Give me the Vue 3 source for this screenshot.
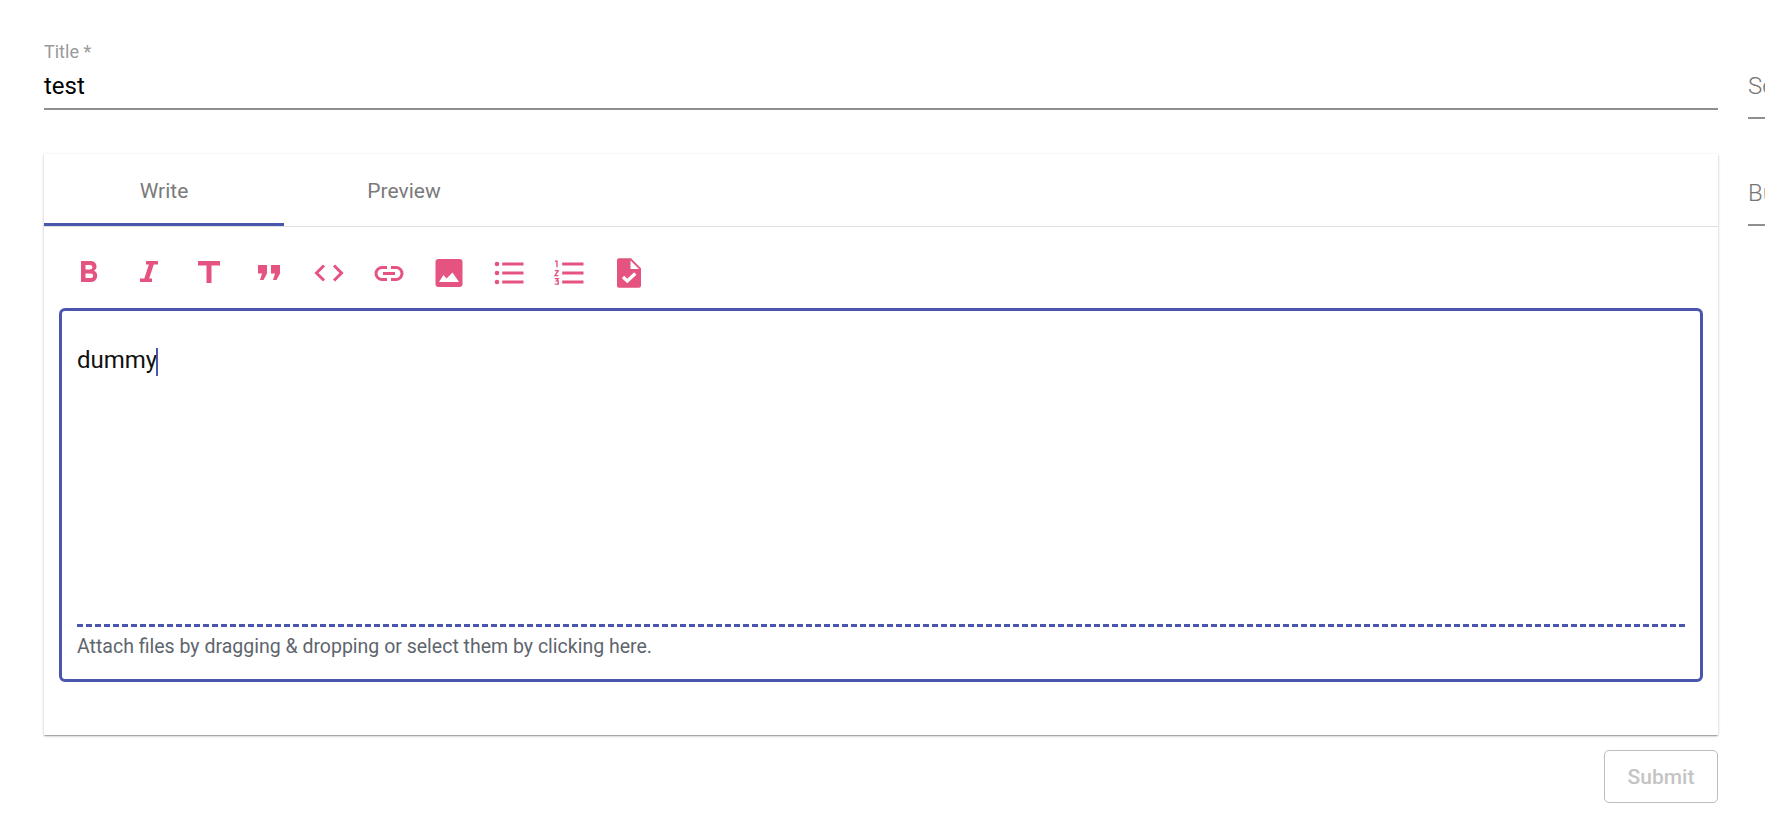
<script setup>
const tabs = ['Write', 'Preview']
</script>

<template>
  <div class="page">
    <main class="main">
      <div class="field">
        <label class="field-label">Title *</label>
        <div class="field-value">test</div>
      </div>

      <section class="card">
        <div class="tabs">
          <div v-for="(t, i) in tabs" :key="t" class="tab" :class="{ active: i === 0 }">{{ t }}</div>
        </div>

        <div class="toolbar">
          <button class="tool" aria-label="Bold">
            <svg viewBox="0 0 30 30" width="30" height="30"><path fill-rule="evenodd" d="M7 3h9.500c3.600 0 6 2.200 6 5.400 0 2-1 3.500-2.500 4.300 2 .7 3.200 2.400 3.200 4.800 0 3.800-2.600 6.500-6.500 6.500H7zM11.500 7v4.500H16c1.500 0 2.400-.9 2.400-2.200S17.500 7 16 7zM11.500 15.500V20h5c1.600 0 2.600-.9 2.600-2.300s-1-2.200-2.600-2.200z"/></svg>
          </button>
          <button class="tool" aria-label="Italic">
            <svg viewBox="0 0 30 30" width="30" height="30"><path d="M12 3h12v3.500h-4.200l-4.600 14H18V24H6v-3.500h4.300l4.600-14H12z"/></svg>
          </button>
          <button class="tool" aria-label="Heading">
            <svg viewBox="0 0 30 30" width="30" height="30"><path d="M4 3h22v4.500h-8.500V25h-5V7.500H4z"/></svg>
          </button>
          <button class="tool" aria-label="Quote">
            <svg viewBox="0 0 30 30" width="30" height="30"><path d="M4 7h9v8.500L9.500 22H6l2-6.500H4zM17 7h9v8.500L22.500 22H19l2-6.500h-4z"/></svg>
          </button>
          <button class="tool" aria-label="Code">
            <svg viewBox="0 0 30 30" width="30" height="30"><path class="line" d="M10 7.500 2.500 15l7.500 7.500M20 7.500 27.500 15 20 22.500"/></svg>
          </button>
          <button class="tool" aria-label="Link">
            <svg viewBox="0 0 30 30" width="30" height="30"><path class="line" d="M13 9.500H8a6 6 0 0 0 0 12h5M17 9.500h5a6 6 0 0 1 0 12h-5M9 15.500h12"/></svg>
          </button>
          <button class="tool" aria-label="Image">
            <svg viewBox="0 0 30 30" width="30" height="30"><rect x="1.500" y="1" width="27" height="28" rx="3"/><path class="cut" d="M5 24l4.500-7 3 3.500 6-6 6.500 9.500z"/></svg>
          </button>
          <button class="tool" aria-label="Bulleted list">
            <svg viewBox="0 0 30 30" width="30" height="30"><circle cx="3" cy="6" r="2.300"/><circle cx="3" cy="15" r="2.300"/><circle cx="3" cy="24" r="2.300"/><path d="M8.200 4.500h21.300v3H8.200zM8.200 13.500h21.300v3H8.200zM8.200 22.500h21.300v3H8.200z"/></svg>
          </button>
          <button class="tool" aria-label="Numbered list">
            <svg viewBox="0 0 30 30" width="30" height="30"><path class="thin" d="M1 3.300h2v6M.8 12.600h3.400L.9 17.600h3.500M.8 20.600h3.400l-1.700 2.300h1.700v3.200H.8"/><path d="M8.200 4.500h21.300v3H8.200zM8.200 13.500h21.300v3H8.200zM8.200 22.500h21.300v3H8.200z"/></svg>
          </button>
          <button class="tool" aria-label="Checklist">
            <svg viewBox="0 0 30 30" width="30" height="30"><path d="M5 .3h12l10 10v17.400a2 2 0 0 1-2 2H5a2 2 0 0 1-2-2V2.300a2 2 0 0 1 2-2z"/><path class="cut" d="M16.500 2.500V11H25z"/><path class="check" d="M9 19l4.300 4 8-7.500"/></svg>
          </button>
        </div>

        <div class="editor">
          <div class="editor-text">dummy<span class="caret"></span></div>
          <div class="attach">Attach files by dragging &amp; dropping or select them by clicking here.</div>
        </div>
      </section>

      <div class="actions">
        <button class="submit" disabled>Submit</button>
      </div>
    </main>

    <aside class="side">
      <div class="side-field"><span>Select</span></div>
      <div class="side-field"><span>Budget</span></div>
    </aside>
  </div>
</template>

<style>
html, body { margin: 0; background: #fff; overflow: hidden; }
</style>

<style scoped>
.page {
  width: 1765px;
  height: 828px;
  overflow: hidden;
  display: flex;
  gap: 30px;
  padding: 43px 0 0 44px;
  box-sizing: border-box;
  font-family: Roboto, sans-serif;
  background: #fff;
}
.main { flex: 0 0 1674px; }
.field { height: 65px; border-bottom: 2px solid #8f8f8f; box-sizing: content-box; }
.field-label { display: block; font-size: 18px; line-height: 18px; color: #9a9a9a; }
.field-value { font-size: 24px; line-height: 30px; margin-top: 10px; color: #000; }
.card {
  margin-top: 44px;
  background: #fff;
  box-shadow: 0 1px 3px rgba(0,0,0,.2), 0 1px 1px rgba(0,0,0,.14), 0 2px 1px -1px rgba(0,0,0,.12);
  padding-bottom: 53px;
}
.tabs { display: flex; height: 72px; border-bottom: 1px solid #e0e0e0; }
.tab {
  width: 240px;
  height: 72px;
  line-height: 74px;
  text-align: center;
  font-size: 21px;
  color: #7a7a7a;
  box-sizing: border-box;
}
.tab.active { border-bottom: 3px solid #4a55ae; }
.toolbar { display: flex; padding: 31px 0 20px 15px; }
.tool {
  width: 60px;
  height: 30px;
  padding: 0;
  border: 0;
  background: none;
  display: flex;
  justify-content: center;
}
.tool svg { fill: #e55480; display: block; }
.tool .line { fill: none; stroke: #e55480; stroke-width: 3; }
.tool .thin { fill: none; stroke: #e55480; stroke-width: 1.4; }
.tool .cut { fill: #fff; }
.tool .check { fill: none; stroke: #fff; stroke-width: 3.2; }
.editor {
  margin: 0 15px;
  height: 374px;
  box-sizing: border-box;
  border: 3px solid #4a55ae;
  border-radius: 6px;
  padding: 0 15px;
  display: flex;
  flex-direction: column;
}
.editor-text { flex: 1; padding-top: 34px; font-size: 24px; line-height: 30px; color: #111; }
.caret { display: inline-block; width: 2px; height: 28px; margin-left: -1px; background: #4a55ae; vertical-align: -8px; }
.attach {
  border-top: 3px dashed #4a55ae;
  font-size: 19.5px;
  line-height: 24px;
  padding: 8px 0 20px;
  color: #5e656d;
}
.actions { display: flex; justify-content: flex-end; margin-top: 15px; }
.submit {
  width: 114px;
  height: 53px;
  border: 1px solid #bdbdbd;
  border-radius: 5px;
  background: #fff;
  font-family: Roboto, sans-serif;
  font-size: 21px;
  font-weight: 500;
  color: #c4c4c4;
  padding: 0;
}
.side { flex: 0 0 300px; padding-top: 32px; }
.side-field {
  height: 42px;
  border-bottom: 2px solid #8f8f8f;
  font-size: 24px;
  font-weight: 300;
  line-height: 22px;
  color: #757575;
  margin-bottom: 63px;
}
</style>
